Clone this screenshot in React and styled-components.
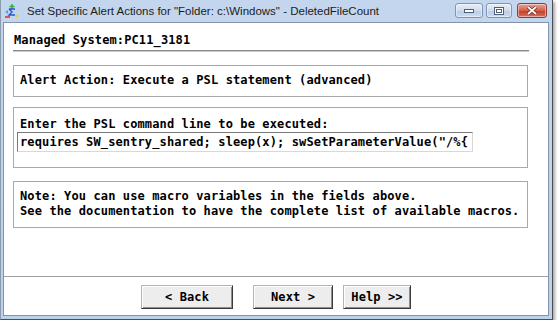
import React from 'react';
import styled, { createGlobalStyle } from 'styled-components';

const GlobalStyle = createGlobalStyle`
	html, body {
		margin: 0;
		padding: 0;
		background: #ffffff;
	}
`;

const Window = styled.div`
	width: 553px;
	height: 320px;
	box-sizing: border-box;
	display: flex;
	flex-direction: column;
	padding: 0 3px 3px 2px;

	background: linear-gradient(#c3d6ee, #bcd1ea);
	border-left: 1px solid #8a9bb0;
	border-right: 1px solid #4e4e4e;
	border-bottom: 1px solid #4e4e4e;
	box-shadow: 2px 2px 3px rgba(0, 0, 0, 0.35);
`;

const TitleBar = styled.div`
	height: 22px;
	flex: none;
	display: flex;
	align-items: center;
	padding-left: 1px;
`;

const TitleText = styled.span`
	margin-left: 7px;
	flex: 1;
	font-family: "Liberation Sans", Arial, sans-serif;
	font-size: 11.5px;
	color: #1c1c1c;
	white-space: nowrap;
`;

const Controls = styled.div`
	display: flex;
	align-items: flex-start;
	height: 22px;
	padding-top: 3px;
	margin-right: 2px;
	box-sizing: border-box;
	gap: 3px;
`;

const CtrlBtn = styled.div`
	width: ${(p) => p.w}px;
	height: 15px;
	box-sizing: border-box;
	display: flex;
	align-items: center;
	justify-content: center;
	border: 1px solid ${(p) => (p.close ? '#8e3b33' : '#7f95b3')};
	border-radius: 3px;
	background: ${(p) =>
		p.close
			? 'linear-gradient(#e8a493 0%, #d2604c 50%, #c3412c 55%, #d9705a 100%)'
			: 'linear-gradient(#e6eef9 0%, #cfdcee 50%, #bccde6 55%, #cddbef 100%)'};
	box-shadow: inset 0 0 0 1px rgba(255, 255, 255, 0.45);
	margin-left: ${(p) => p.ml || 0}px;
`;

const Client = styled.div`
	flex: 1;
	display: flex;
	flex-direction: column;
	background: #ffffff;
	border: 1px solid #8394aa;
	font-family: "DejaVu Sans Mono", "Liberation Mono", monospace;
	font-weight: bold;
	font-size: 12px;
	letter-spacing: 0.12px;
	color: #000000;
`;

const Content = styled.div`
	flex: 1;
	padding: 10px 0 0 9px;
`;

const Header = styled.div`
	line-height: 14px;
	padding-left: 1px;
`;

const Rule = styled.div`
	width: 516px;
	margin-top: 3px;
	border-top: 1px solid #8c8c8c;
	border-bottom: 1px solid #c8c8c8;
`;

const Box = styled.div`
	width: 515px;
	box-sizing: border-box;
	margin-top: ${(p) => p.mt}px;
	padding: ${(p) => p.pad};
	border: 1px solid #a9a9a9;
	line-height: ${(p) => p.lh || 14}px;
	white-space: pre;
`;

const Field = styled.input`
	display: block;
	width: 456px;
	height: 20px;
	box-sizing: border-box;
	margin: 1px 0 0 -3px;
	padding: 0 2px;
	border: 1px solid;
	border-color: #7a7a7a #d8d8d8 #d8d8d8 #7a7a7a;
	background: #ffffff;
	font: inherit;
	letter-spacing: inherit;
	color: #000000;
	outline: none;
`;

const Footer = styled.div`
	height: 39px;
	box-sizing: border-box;
	border-top: 1px solid #a0a0a0;
	padding-top: 8px;
	display: flex;
	justify-content: center;
`;

const Button = styled.button`
	width: ${(p) => p.w}px;
	height: 24px;
	margin-right: ${(p) => p.mr || 0}px;
	box-sizing: border-box;
	padding: 0;
	background: #ededed;
	border: 1px solid;
	border-color: #b4b4b4 #3a3a3a #3a3a3a #b4b4b4;
	box-shadow: inset 1px 1px 0 #ffffff, inset -1px -1px 0 #8e8e8e;
	font: inherit;
	letter-spacing: inherit;
	color: #000000;
`;

function AppIcon() {
	return (
		<svg width="16" height="16" viewBox="0 0 16 16">
			<path d="M8 1v5M5.5 3.5h5" stroke="#2fb52f" strokeWidth="1.6" />
			<path d="M5 6h6M5 6l3 3-3 3h6" stroke="#2a52d6" strokeWidth="1.4" fill="none" />
			<path d="M1 9l3-2v4z" fill="#29b6e0" />
			<path d="M1 14h5" stroke="#e03030" strokeWidth="1.6" />
			<path d="M13 10.5l.7 1.5 1.5.3-1.2 1 .3 1.6-1.3-.8-1.3.8.3-1.6-1.2-1 1.5-.3z" fill="#f2d21c" />
		</svg>
	);
}

function App() {
	return (
		<>
			<GlobalStyle />
			<Window>
				<TitleBar>
					<AppIcon />
					<TitleText>Set Specific Alert Actions for "Folder: c:\Windows" - DeletedFileCount</TitleText>
					<Controls>
						<CtrlBtn w={28}>
							<svg width="10" height="4"><rect x="0.5" y="0.5" width="9" height="3" fill="#fff" stroke="#4e5f78" /></svg>
						</CtrlBtn>
						<CtrlBtn w={26}>
							<svg width="10" height="8"><rect x="0.5" y="0.5" width="9" height="7" fill="#fff" stroke="#4e5f78" /><rect x="2.5" y="2.5" width="5" height="3" fill="none" stroke="#4e5f78" /></svg>
						</CtrlBtn>
						<CtrlBtn w={30} close ml={2}>
							<svg width="12" height="9" viewBox="0 0 12 9">
								<path d="M2 1l8 7M10 1l-8 7" stroke="#5a1a12" strokeWidth="3" />
								<path d="M2 1l8 7M10 1l-8 7" stroke="#ffffff" strokeWidth="1.8" />
							</svg>
						</CtrlBtn>
					</Controls>
				</TitleBar>
				<Client>
					<Content>
						<Header>Managed System:PC11_3181</Header>
						<Rule />
						<Box mt={13} pad="7px 6px 9px">Alert Action: Execute a PSL statement (advanced)</Box>
						<Box mt={10} pad="9px 6px 15px">
							Enter the PSL command line to be executed:
							<Field readOnly value={'requires SW_sentry_shared; sleep(x); swSetParameterValue("/%{(VAR_NAME)}", 0);'} />
						</Box>
						<Box mt={13} pad="7px 6px 8px" lh={15}>
							{'Note: You can use macro variables in the fields above.\nSee the documentation to have the complete list of available macros.'}
						</Box>
					</Content>
					<Footer>
						<Button w={92} mr={20}>&lt; Back</Button>
						<Button w={80} mr={10}>Next &gt;</Button>
						<Button w={68}>Help &gt;&gt;</Button>
					</Footer>
				</Client>
			</Window>
		</>
	);
}

export default App;
